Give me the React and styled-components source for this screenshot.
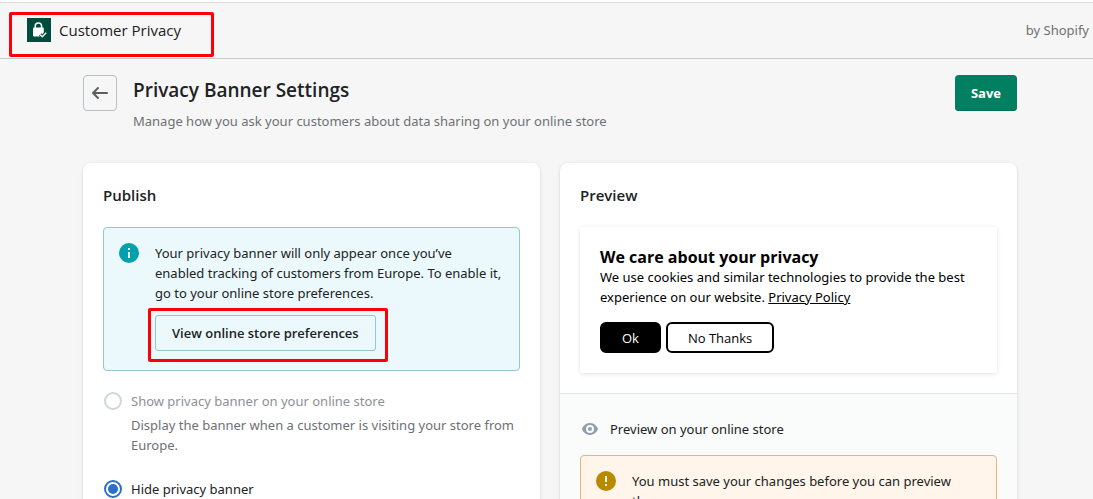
import React from "react";
import styled, { createGlobalStyle } from "styled-components";

const GlobalStyle = createGlobalStyle`
  *, *::before, *::after { box-sizing: border-box; }
  body {
    margin: 0;
    background: #f6f6f6;
    color: #202223;
    font-family: "Noto Sans", "Open Sans", sans-serif;
    font-size: 13px;
    line-height: 20px;
  }
  h1, h2, h3, p { margin: 0; }
  button { font: inherit; cursor: pointer; }
`;

const headingFont = `"Open Sans", "Noto Sans", sans-serif`;

const Page = styled.div`
  min-height: 100vh;
  border-top: 2px solid #fff;
`;

const TopBar = styled.header`
  display: flex;
  align-items: center;
  justify-content: space-between;
  height: 57px;
  padding: 0 4px 2px 27px;
  border-top: 1px solid #dcdcdc;
  border-bottom: 1px solid #c9cacb;
`;

const Brand = styled.div`
  position: relative;
  display: flex;
  align-items: center;
  gap: 8px;
  font-family: ${headingFont};
  font-size: 15px;
`;

const Vendor = styled.span`
  color: #6d7175;
`;

const Highlight = styled.span`
  position: absolute;
  inset: ${({ $inset }) => $inset};
  border: 3px solid #fb0007;
  border-radius: 2px;
  pointer-events: none;
`;

const Main = styled.main`
  padding: 16px 76px 20px 83px;
`;

const PageHeader = styled.div`
  display: flex;
  align-items: flex-start;
  gap: 16px;
  margin-bottom: 32px;
`;

const TitleBlock = styled.div`
  flex: 1;
`;

const Title = styled.h1`
  margin-bottom: 6px;
  font-family: ${headingFont};
  font-size: 19px;
  font-weight: 600;
  line-height: 30px;
`;

const Subtitle = styled.p`
  color: #6d7175;
`;

const BackButton = styled.button`
  display: flex;
  align-items: center;
  justify-content: center;
  width: 34px;
  height: 36px;
  padding: 0;
  color: #5c5f62;
  background: transparent;
  border: 1px solid #babfc3;
  border-radius: 4px;
`;

const SaveButton = styled.button`
  height: 36px;
  padding: 0 16px;
  color: #fff;
  background: #008060;
  border: 0;
  border-radius: 4px;
  box-shadow: inset 0 -1px 0 #006e52;
  font-family: ${headingFont};
  font-weight: 700;
`;

const Columns = styled.div`
  display: grid;
  grid-template-columns: 1fr 1fr;
  gap: 20px;
`;

const Card = styled.section`
  background: #fff;
  border-radius: 8px;
  box-shadow: 0 0 5px rgba(23, 24, 24, 0.05), 0 1px 2px rgba(0, 0, 0, 0.15);
  overflow: hidden;
`;

const CardSection = styled.div`
  padding: 20px;
  background: ${({ $subdued }) => ($subdued ? "#fafbfb" : "transparent")};
  border-top: ${({ $subdued }) => ($subdued ? "1px solid #e1e3e5" : "0")};
`;

const CardTitle = styled.h2`
  margin-bottom: 20px;
  font-family: ${headingFont};
  font-size: 15px;
  font-weight: 600;
  line-height: 24px;
`;

const tones = {
  info: { fill: "#ebf9fc", line: "#98c6cd" },
  warning: { fill: "#fff5ea", line: "#e1b878" },
};

const Banner = styled.div`
  display: flex;
  gap: 16px;
  padding: 15px 15px 19px;
  background: ${({ $tone }) => tones[$tone].fill};
  border: 1px solid ${({ $tone }) => tones[$tone].line};
  border-radius: 4px;

  > svg { flex: none; }
`;

const ButtonSlot = styled.div`
  position: relative;
  width: fit-content;
  margin-top: 12px;
`;

const OutlineButton = styled.button`
  height: 36px;
  padding: 0 16px;
  color: #202223;
  background: transparent;
  border: 1px solid #98c6cd;
  border-radius: 3px;
  font-family: ${headingFont};
  font-weight: 600;
`;

const Choices = styled.div`
  display: grid;
  gap: 24px;
  margin-top: 20px;
`;

const ChoiceLabel = styled.label`
  display: flex;
  align-items: center;
  gap: 9px;
  padding-left: 1px;
  color: ${({ $disabled }) => ($disabled ? "#8c9196" : "#202223")};
`;

const Radio = styled.input`
  appearance: none;
  display: grid;
  place-items: center;
  width: 18px;
  height: 18px;
  margin: 0;
  background: #fff;
  border: 2px solid #d2d5d8;
  border-radius: 50%;

  &:checked { border-color: #2c6ecb; }
  &:checked::before {
    content: "";
    width: 10px;
    height: 10px;
    background: #2c6ecb;
    border-radius: 50%;
  }
`;

const HelpText = styled.p`
  margin-top: 4px;
  padding-left: 28px;
  color: #6d7175;
`;

const CookieBox = styled.div`
  padding: 20px;
  color: #000;
  border-radius: 2px;
  box-shadow: 0 1px 4px rgba(0, 0, 0, 0.12);
`;

const CookieTitle = styled.h3`
  font-family: ${headingFont};
  font-size: 16px;
  font-weight: 700;
  line-height: 20px;
`;

const PolicyLink = styled.a`
  color: inherit;
`;

const CookieActions = styled.div`
  display: flex;
  gap: 5px;
  margin-top: 15px;
`;

const CookieButton = styled.button`
  height: 31px;
  padding: 0 20px;
  color: ${({ $filled }) => ($filled ? "#fff" : "#000")};
  background: ${({ $filled }) => ($filled ? "#000" : "#fff")};
  border: 2px solid #000;
  border-radius: 6px;
  font-family: ${headingFont};
`;

const PreviewLine = styled.div`
  display: flex;
  align-items: center;
  gap: 10px;
  margin: 5px 0 16px;
`;

const LockLogo = () => (
  <svg width="24" height="24" viewBox="0 0 24 24" aria-hidden="true">
    <rect width="24" height="24" fill="#004c3f" />
    <path d="M8.2 10V8.3a3.2 3.2 0 0 1 6.4 0V10" fill="none" stroke="#fff" strokeWidth="1.5" />
    <rect x="6" y="9.5" width="10.8" height="9" rx="1" fill="#fff" />
    <path d="M13.2 16.6l2.1 2.1 3.9-4" fill="none" stroke="#004c3f" strokeWidth="3.6" />
    <path d="M13.2 16.6l2.1 2.1 3.9-4" fill="none" stroke="#e6f0ec" strokeWidth="1.5" />
  </svg>
);

const ArrowLeft = () => (
  <svg width="20" height="20" viewBox="0 0 20 20" aria-hidden="true">
    <path d="M17 9H5.414l3.293-3.293a.999.999 0 1 0-1.414-1.414l-5 5a.999.999 0 0 0 0 1.414l5 5a.997.997 0 0 0 1.414 0 .999.999 0 0 0 0-1.414L5.414 11H17a1 1 0 1 0 0-2z" fill="currentColor" />
  </svg>
);

const InfoIcon = () => (
  <svg width="20" height="20" viewBox="0 0 20 20" aria-hidden="true">
    <circle cx="10" cy="10" r="10" fill="#00a0ac" />
    <path d="M9 5h2v2H9zM9 9h2v6H9z" fill="#ebf9fc" />
  </svg>
);

const WarningIcon = () => (
  <svg width="20" height="20" viewBox="0 0 20 20" aria-hidden="true">
    <circle cx="10" cy="10" r="10" fill="#b98900" />
    <path d="M9 5h2v6H9zM9 13h2v2H9z" fill="#fff5ea" />
  </svg>
);

const EyeIcon = () => (
  <svg width="20" height="20" viewBox="0 0 20 20" aria-hidden="true">
    <path fillRule="evenodd" d="M17.928 9.628C17.836 9.399 15.611 4 10 4S2.164 9.399 2.072 9.628a1.017 1.017 0 0 0 0 .744C2.164 10.601 4.389 16 10 16s7.836-5.399 7.928-5.628a1.017 1.017 0 0 0 0-.744zM10 14a4 4 0 1 1 0-8 4 4 0 0 1 0 8zm0-6a2 2 0 1 0 .002 4.001A2 2 0 0 0 10 8z" fill="#919eab" />
  </svg>
);

export default function App() {
  return (
    <Page>
      <GlobalStyle />
      <TopBar>
        <Brand>
          <LockLogo />
          <span>Customer Privacy</span>
          <Highlight $inset="-6px -33px -15px -18px" />
        </Brand>
        <Vendor>by Shopify</Vendor>
      </TopBar>
      <Main>
        <PageHeader>
          <BackButton type="button" aria-label="Back">
            <ArrowLeft />
          </BackButton>
          <TitleBlock>
            <Title>Privacy Banner Settings</Title>
            <Subtitle>Manage how you ask your customers about data sharing on your online store</Subtitle>
          </TitleBlock>
          <SaveButton type="button">Save</SaveButton>
        </PageHeader>
        <Columns>
          <Card>
            <CardSection>
              <CardTitle>Publish</CardTitle>
              <Banner $tone="info">
                <InfoIcon />
                <div>
                  <p>
                    Your privacy banner will only appear once you’ve enabled tracking of customers
                    from Europe. To enable it, go to your online store preferences.
                  </p>
                  <ButtonSlot>
                    <OutlineButton type="button">View online store preferences</OutlineButton>
                    <Highlight $inset="-7px -12px -11px -7px" />
                  </ButtonSlot>
                </div>
              </Banner>
              <Choices>
                <div>
                  <ChoiceLabel $disabled>
                    <Radio type="radio" name="visibility" disabled aria-describedby="show-help" />
                    Show privacy banner on your online store
                  </ChoiceLabel>
                  <HelpText id="show-help">
                    Display the banner when a customer is visiting your store from Europe.
                  </HelpText>
                </div>
                <ChoiceLabel>
                  <Radio type="radio" name="visibility" defaultChecked />
                  Hide privacy banner
                </ChoiceLabel>
              </Choices>
            </CardSection>
          </Card>
          <Card>
            <CardSection>
              <CardTitle>Preview</CardTitle>
              <CookieBox>
                <CookieTitle>We care about your privacy</CookieTitle>
                <p>
                  We use cookies and similar technologies to provide the best experience on our
                  website. <PolicyLink href="#policy">Privacy Policy</PolicyLink>
                </p>
                <CookieActions>
                  <CookieButton type="button" $filled>Ok</CookieButton>
                  <CookieButton type="button">No Thanks</CookieButton>
                </CookieActions>
              </CookieBox>
            </CardSection>
            <CardSection $subdued>
              <PreviewLine>
                <EyeIcon />
                <span>Preview on your online store</span>
              </PreviewLine>
              <Banner $tone="warning">
                <WarningIcon />
                <p>You must save your changes before you can preview them.</p>
              </Banner>
            </CardSection>
          </Card>
        </Columns>
      </Main>
    </Page>
  );
}
